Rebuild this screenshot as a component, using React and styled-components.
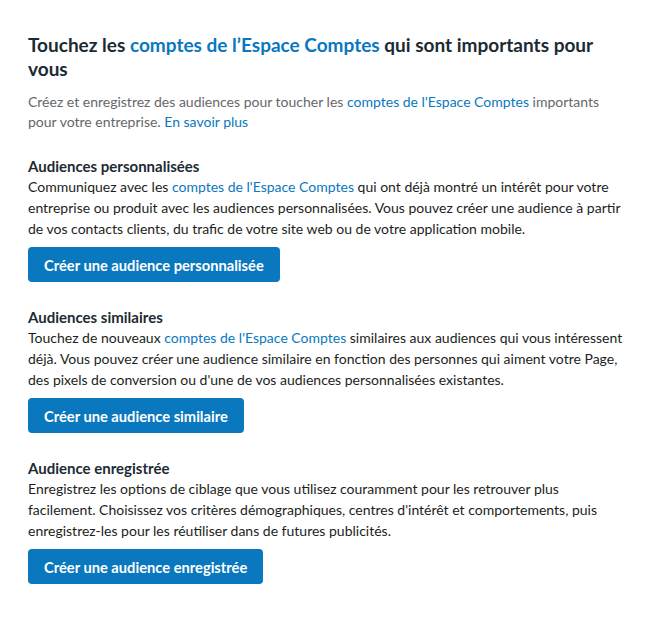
import React from "react";
import styled, { createGlobalStyle } from "styled-components";

const COLORS = {
  ink: "#1c2b33",
  body: "#1c1e21",
  muted: "#65676b",
  link: "#0a78be",
  button: "#0a78be",
};

const BODY_FONT = `"Lato", "Noto Sans", sans-serif`;

const GlobalStyle = createGlobalStyle`
  body {
    margin: 0;
    background: #ffffff;
    font-family: ${BODY_FONT};
  }
`;

const sections = [
  {
    title: "Audiences personnalisées",
    before: "Communiquez avec les ",
    after:
      " qui ont déjà montré un intérêt pour votre entreprise ou produit avec les audiences personnalisées. Vous pouvez créer une audience à partir de vos contacts clients, du trafic de votre site web ou de votre application mobile.",
    cta: "Créer une audience personnalisée",
  },
  {
    title: "Audiences similaires",
    before: "Touchez de nouveaux ",
    after:
      " similaires aux audiences qui vous intéressent déjà. Vous pouvez créer une audience similaire en fonction des personnes qui aiment votre Page, des pixels de conversion ou d'une de vos audiences personnalisées existantes.",
    cta: "Créer une audience similaire",
  },
  {
    title: "Audience enregistrée",
    before:
      "Enregistrez les options de ciblage que vous utilisez couramment pour les retrouver plus facilement. Choisissez vos critères démographiques, centres d'intérêt et comportements, puis enregistrez-les pour les réutiliser dans de futures publicités.",
    after: "",
    cta: "Créer une audience enregistrée",
    noLink: true,
  },
];

const App = () => {
  return (
    <>
      <GlobalStyle />
      <Page>
        <Intro>
          <Title>
            Touchez les <TitleLink>comptes de l’Espace Comptes</TitleLink> qui
            sont importants pour vous
          </Title>
          <Lead>
            Créez et enregistrez des audiences pour toucher les{" "}
            <Link>comptes de l'Espace Comptes</Link> importants pour votre
            entreprise. <Link>En savoir plus</Link>
          </Lead>
        </Intro>

        <Sections>
          {sections.map((s) => (
            <Section key={s.title}>
              <SectionTitle>{s.title}</SectionTitle>
              <Text>
                {s.before}
                {!s.noLink && <Link>comptes de l'Espace Comptes</Link>}
                {s.after}
              </Text>
              <Button>{s.cta}</Button>
            </Section>
          ))}
        </Sections>
      </Page>
    </>
  );
};

const Page = styled.div`
  width: 596px;
  padding: 33px 28px 40px;
  display: flex;
  flex-direction: column;
  gap: 24px;
`;

const Intro = styled.div`
  display: flex;
  flex-direction: column;
  gap: 11px;
`;

const Title = styled.h1`
  margin: 0;
  font-size: 19px;
  line-height: 24px;
  font-weight: 700;
  color: ${COLORS.ink};
`;

const TitleLink = styled.span`
  color: ${COLORS.link};
`;

const Lead = styled.p`
  margin: 0;
  font-size: 14px;
  line-height: 20px;
  color: ${COLORS.muted};
`;

const Link = styled.a`
  color: ${COLORS.link};
  text-decoration: none;
  cursor: pointer;
`;

const Sections = styled.div`
  display: flex;
  flex-direction: column;
  gap: 25px;
`;

const Section = styled.section`
  display: flex;
  flex-direction: column;
  align-items: flex-start;
`;

const SectionTitle = styled.h2`
  margin: 0;
  font-size: 15px;
  line-height: 20px;
  font-weight: 700;
  color: ${COLORS.ink};
`;

const Text = styled.p`
  margin: 0 0 8px;
  font-size: 14px;
  line-height: 21px;
  color: ${COLORS.body};
`;

const Button = styled.button`
  height: 35px;
  padding: 0 16px;
  border: none;
  border-radius: 4px;
  background: ${COLORS.button};
  color: #ffffff;
  font-family: ${BODY_FONT};
  font-size: 14.7px;
  font-weight: 700;
  cursor: pointer;
`;

export default App;
